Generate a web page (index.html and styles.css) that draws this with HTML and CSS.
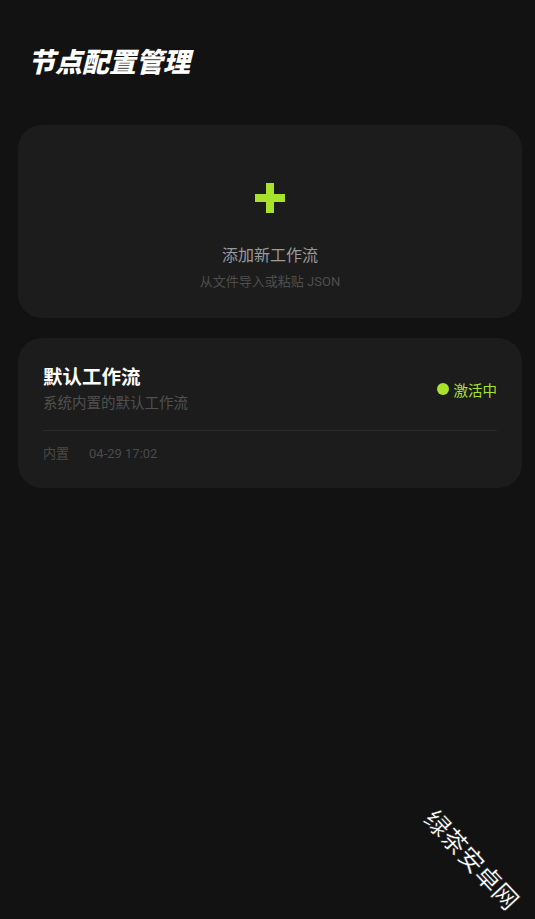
FILE: index.html
```html
<!DOCTYPE html>
<html lang="zh-CN">
<head>
  <meta charset="UTF-8" />
  <meta name="viewport" content="width=device-width, initial-scale=1" />
  <title>节点配置管理</title>
  <link rel="stylesheet" href="styles.css">
</head>
<body>

<header class="page-head">
  <h1>节点配置管理</h1>
</header>

<main>
  <section class="card add-card">
    <svg class="plus" width="32" height="32" viewBox="0 0 32 32">
      <rect x="12" y="1" width="8" height="30" fill="#a8e22c" />
      <rect x="1" y="12" width="30" height="8" fill="#a8e22c" />
    </svg>
    <div class="add-title">添加新工作流</div>
    <div class="add-sub">从文件导入或粘贴 JSON</div>
  </section>

  <section class="card flow-card">
    <div class="flow-top">
      <div class="flow-info">
        <h2>默认工作流</h2>
        <p>系统内置的默认工作流</p>
      </div>
      <div class="status"><span class="dot"></span>激活中</div>
    </div>
    <div class="flow-foot">
      <span>内置</span>
      <span>04-29 17:02</span>
    </div>
  </section>
</main>

<div class="watermark">绿茶安卓网</div>

</body>
</html>
```
FILE: styles.css
```css
body {
  margin: 0;
  padding: 0;
  background: #121212;
  color: #fff;
  font-family: Roboto, "Noto Sans CJK SC", sans-serif;
  height: 919px;
  overflow: hidden;
  position: relative;
}
.page-head {
  padding: 43px 28px 0;
  height: 125px;
  box-sizing: border-box;
}
.page-head h1 {
  margin: 0;
  font-size: 27px;
  font-weight: 900;
  font-style: italic;
  line-height: 40px;
}
main {
  padding: 0 13px 0 18px;
  display: flex;
  flex-direction: column;
  gap: 20px;
}
.card {
  background: #1c1c1c;
  border-radius: 24px;
}
.add-card {
  height: 193px;
  display: flex;
  flex-direction: column;
  align-items: center;
  box-sizing: border-box;
  padding-top: 57px;
}
.plus {
  display: block;
}
.add-title {
  margin-top: 31px;
  font-size: 16px;
  color: #9a9a9a;
  line-height: 22px;
}
.add-sub {
  margin-top: 6px;
  font-size: 13px;
  color: #4e4e4e;
  line-height: 18px;
}
.flow-card {
  height: 150px;
  box-sizing: border-box;
  padding: 26px 25px 0 25px;
}
.flow-top {
  display: flex;
  justify-content: space-between;
  align-items: center;
  padding-bottom: 16px;
  border-bottom: 1px solid #2a2a2a;
}
.flow-info h2 {
  margin: 0;
  font-size: 19.5px;
  font-weight: 700;
  line-height: 28px;
}
.flow-info p {
  margin: 2px 0 0;
  font-size: 14.5px;
  color: #505050;
  line-height: 20px;
}
.status {
  display: flex;
  align-items: center;
  gap: 5px;
  font-size: 14.5px;
  color: #a8e22c;
}
.dot {
  width: 12px;
  height: 12px;
  border-radius: 50%;
  background: #a8e22c;
}
.flow-foot {
  display: flex;
  gap: 20px;
  padding-top: 13px;
  font-size: 13px;
  color: #4a4a4a;
  line-height: 20px;
}
.watermark {
  position: absolute;
  left: 428px;
  top: 800px;
  font-size: 25px;
  font-weight: 500;
  line-height: 30px;
  color: #fff;
  transform: rotate(47deg);
  transform-origin: 0 50%;
  -webkit-text-stroke: 0.5px #000;
  white-space: nowrap;
}
```
